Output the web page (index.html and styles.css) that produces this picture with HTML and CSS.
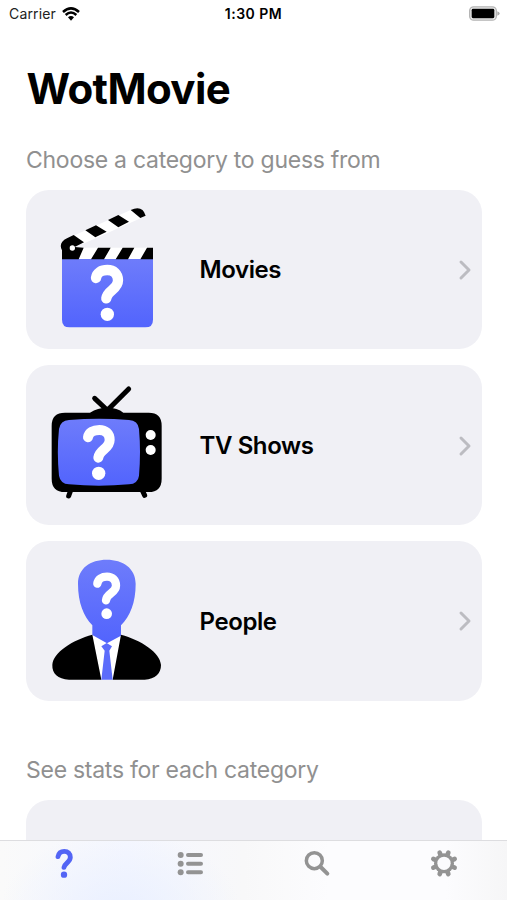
FILE: index.html
```
<!DOCTYPE html>
<html lang="en">
<head>
<meta charset="utf-8">
<title>WotMovie</title>
<link rel="stylesheet" href="styles.css">
</head>
<body>
<div class="screen">
  <header class="status">
    <div class="status-left"><span class="carrier">Carrier</span>
      <svg class="wifi" viewBox="0 0 54 42"><path d="M3 15Q27-7 51 15M11 24Q27 9 43 24" fill="none" stroke="#000" stroke-width="7.5"/><path d="M18 31Q27 23 36 31L27 41Z"/></svg>
    </div>
    <span class="time">1:30 PM</span>
    <div class="status-right">
      <svg class="battery" viewBox="0 0 93 44"><rect x="2" y="2" width="80" height="40" rx="12" fill="#eee" stroke="#b4b4b4" stroke-width="4"/><rect x="8" y="8" width="68" height="28" rx="4"/><path d="M85 15Q92 18 92 22Q92 26 85 29Z" fill="#aaa"/></svg>
    </div>
  </header>
  <main>
    <h1>WotMovie</h1>
    <h2 class="choose">Choose a category to guess from</h2>
    <section class="cards">
      <a class="card">
        <svg class="art art-movies" viewBox="0 0 390 435">
          <defs><linearGradient id="blue" x1="0" y1="0" x2="0" y2="1"><stop offset="0" stop-color="#6e7cfb"/><stop offset="1" stop-color="#5264fd"/></linearGradient></defs>
          <path d="M66 192H339V374Q339 397 316 397H89Q66 397 66 374Z" fill="url(#blue)"/>
          <path d="M104 121L272 45Q306 30 317 63L128 147Z" fill="#fff"/>
          <path d="M110 158H338V192H110Z" fill="#fff"/>
          <path d="M66 193V166Q54 143 81 130L101 120L132 142L104 156L131 158L116 193ZM153 193L174 158H212L192 193ZM227 193L248 158H283L264 193ZM301 193L321 158H339V193ZM136 106L168 91L200 110L166 127ZM204 75L235 60L267 80L235 97ZM272 45Q307 29 317 62L301 69Z"/>
          <circle cx="97" cy="159" r="8" fill="#fff"/>
          <path d="M168 249C170 233 184 225 202 225C221 225 234 236 234 256C234 284 203 284 199 310" class="hook" stroke-width="31"/><circle cx="202" cy="358" r="20" fill="#fff"/>
        </svg>
        <span class="label">Movies</span>
        <svg class="chevron" viewBox="0 0 14 22"><path d="M3 3L11 11L3 19"/></svg>
      </a>
      <a class="card">
        <svg class="art art-tv" viewBox="0 0 390 405">
          <path d="M164 70L202 106L266 42M92 346L86 363M307 346L314 361" fill="none" stroke="#000" stroke-width="15" stroke-linecap="round"/>
          <path d="M150 113Q173 98 201 98Q233 98 250 113H326Q365 113 365 152V311Q365 351 326 351H75Q35 351 35 311V152Q35 113 75 113Z"/>
          <path d="M87 135Q177 127 267 135Q294 137 297 162Q303 231 297 302Q294 326 267 328Q177 336 87 328Q61 326 57 302Q50 231 57 162Q61 137 87 135Z" fill="url(#blue)"/>
          <circle cx="332" cy="180" r="15" fill="#fff"/><circle cx="332" cy="225" r="15" fill="#fff"/>
          <path d="M144 187C146 172 160 165 178 165C196 165 209 175 209 195C209 222 178 223 175 248" class="hook" stroke-width="30"/><circle cx="176" cy="295" r="20" fill="#fff"/>
        </svg>
        <span class="label">TV Shows</span>
        <svg class="chevron" viewBox="0 0 14 22"><path d="M3 3L11 11L3 19"/></svg>
      </a>
      <a class="card">
        <svg class="art art-people" viewBox="0 0 390 420">
          <path d="M157 254L200 274L243 254L218 389H184Z" fill="#fff"/>
          <path d="M200 29C249 29 287 55 287 101C287 158 270 199 243 226V257L201 280L157 255V226C131 199 114 158 114 101C114 55 151 29 200 29Z" fill="url(#blue)"/>
          <path d="M157 254L184 389H87C53 387 36 371 37 345C39 307 98 270 157 254ZM243 254L218 389H314C346 387 363 371 363 345C361 307 302 270 243 254Z"/>
          <path d="M200 279L216 289L208 302L218 389H184L194 302L184 289Z" fill="#5c6cfb"/>
          <path d="M172 101C174 87 186 80 201 80C217 80 228 90 228 107C228 129 200 129 198 151" class="hook" stroke-width="25"/><circle cx="200" cy="191" r="16" fill="#fff"/>
        </svg>
        <span class="label">People</span>
        <svg class="chevron" viewBox="0 0 14 22"><path d="M3 3L11 11L3 19"/></svg>
      </a>
    </section>
    <h2 class="stats">See stats for each category</h2>
    <section class="card"></section>
  </main>
  <nav class="tabs">
    <a><svg class="tab-icon" viewBox="-6 0 90 90"><path d="M24 26C26 15 33 10 43 10C54 10 61 17 61 28C61 43 44 45 42 58" fill="none" stroke="#5365f5" stroke-width="14.5" stroke-linecap="round"/><circle cx="42" cy="80" r="9.5" fill="#5365f5"/></svg></a>
    <a><svg class="tab-icon" viewBox="-4 1 90 90"><g fill="#939393"><circle cx="13" cy="22" r="9"/><circle cx="13" cy="48" r="9"/><circle cx="13" cy="74" r="9"/></g><path d="M35 22H74M35 48H74M35 74H74" fill="none" stroke="#939393" stroke-width="12" stroke-linecap="round"/></svg></a>
    <a><svg class="tab-icon" viewBox="0 2 90 90"><g fill="none" stroke="#939393"><circle cx="37" cy="40" r="24" stroke-width="10.5"/><path d="M56 59L76 79" stroke-width="12" stroke-linecap="round"/></g></svg></a>
    <a><svg class="tab-icon" viewBox="-45 -46 90 90"><g stroke="#939393" stroke-width="14" stroke-linecap="round"><path d="M-13-32L13 32M13-32L-13 32M-32-13L32 13M-32 13L32-13"/></g><circle r="30" fill="#939393"/><circle r="20" fill="#fbfbfd"/></svg></a>
  </nav>
</div>
</body>
</html>
```

FILE: styles.css
```
* { box-sizing: border-box; }
body { margin: 0; background: #fff; font-family: Inter, "Liberation Sans", sans-serif; color: #000; }
.screen { height: 900px; overflow: hidden; display: flex; flex-direction: column; }
.status { height: 27px; flex: none; display: grid; grid-template-columns: 1fr auto 1fr; align-items: center; padding: 0 7px 0 9px; font-size: 14px; }
.status-left { display: flex; align-items: center; gap: 6px; }
.carrier { color: #222; letter-spacing: 0.15px; }
.wifi { width: 18px; height: 14px; }
.time { font-weight: 600; letter-spacing: 0.5px; margin-right: 2px; }
.status-right { display: flex; justify-content: flex-end; }
.battery { width: 31px; height: 15px; }
main { flex: 1; min-height: 0; overflow: hidden; padding: 0 25px 0 26px; }
h1 { margin: 37px 0 0 0.5px; font-size: 42px; line-height: 50px; font-weight: 700; letter-spacing: -0.6px; }
h2 { margin: 0; font-size: 23px; line-height: 30px; font-weight: 400; color: #909090; white-space: nowrap; letter-spacing: -0.27px; }
.choose { margin-top: 31px; }
.cards { display: flex; flex-direction: column; gap: 16px; margin-top: 14.5px; }
.card { display: flex; align-items: center; height: 159.7px; background: #f0f0f5; border-radius: 23px; padding: 0 10px 0 14px; }
.art { width: 130px; flex: none; align-self: flex-start; }
.art-movies { height: 145px; margin-top: 5px; }
.art-tv { height: 135px; margin-top: 10px; }
.art-people { height: 140px; margin-top: 9px; }
.hook { fill: none; stroke: #fff; stroke-linecap: round; }
.label { margin-left: 29.5px; padding-top: 2px; flex: 1; font-size: 24px; font-weight: 600; line-height: 32px; letter-spacing: -0.4px; }
.chevron { width: 14px; height: 22px; margin-top: 1px; fill: none; stroke: #bcbcc1; stroke-width: 3; stroke-linecap: round; stroke-linejoin: round; }
.stats { margin-top: 54px; margin-bottom: 15px; }
.tabs { flex: none; height: 60px; border-top: 1px solid #dddde0; display: grid; grid-template-columns: repeat(4, 1fr); background: radial-gradient(ellipse 120px 80px at 120px 70px, #eaf0ff, transparent), linear-gradient(90deg, #fafafa, #f5f7ff 25%, #f8f8f9 48%, #fcfcfe 65%, #fcfcfe 88%, #f6f6f7); }
.tabs a { display: flex; justify-content: center; padding-top: 7px; }
.tab-icon { width: 30px; height: 30px; }
```
